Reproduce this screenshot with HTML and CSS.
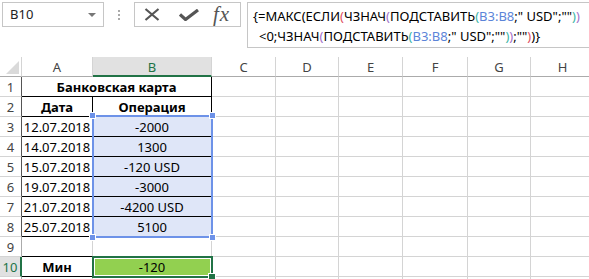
FILE: index.html
```html
<!DOCTYPE html>
<html lang="ru">
<head>
    <meta charset="UTF-8">
    <title>Банковская карта</title>
    <link rel="stylesheet" href="styles.css">
</head>
<body>
    <div class="toolbar">
        <div class="namebox">
            <span class="name">B10</span>
            <span class="caret"></span>
        </div>
        <div class="grip"><span></span></div>
        <div class="fbuttons">
            <svg class="ico-x" width="16" height="13" viewBox="0 0 16 13">
                <path d="M1.5 1 L14.5 12 M14.5 1 L1.5 12" stroke="#555" stroke-width="2.2" fill="none"/>
            </svg>
            <svg class="ico-ok" width="20" height="12" viewBox="0 0 20 12">
                <path d="M1 5.5 L6.5 10.5 L19 1" stroke="#555" stroke-width="3.2" fill="none"/>
            </svg>
            <span class="fx">fx</span>
        </div>
        <div class="formula">
            <div class="line1">{=МАКС<span class="p1">(</span>ЕСЛИ<span class="p2">(</span>ЧЗНАЧ<span class="p3">(</span>ПОДСТАВИТЬ<span class="p4">(</span><span class="ref">B3:B8</span>;" USD";""<span class="p4">)</span><span class="p3">)</span></div>
            <div class="line2">&lt;0;ЧЗНАЧ<span class="p3">(</span>ПОДСТАВИТЬ<span class="p4">(</span><span class="ref">B3:B8</span>;" USD";""<span class="p4">)</span><span class="p3">)</span>;""<span class="p2">)</span><span class="p1">)</span>}</div>
        </div>
    </div>

    <div class="sheet">
        <div class="row head">
            <div class="c corner"><span class="tri"></span></div>
            <div class="c">A</div>
            <div class="c hsel">B</div>
            <div class="c">C</div>
            <div class="c">D</div>
            <div class="c">E</div>
            <div class="c">F</div>
            <div class="c">G</div>
            <div class="c">H</div>
        </div>
        <div class="row">
            <div class="c rh k">1</div>
            <div class="c k bold wide">Банковская карта</div>
            <div class="c"></div><div class="c"></div><div class="c"></div><div class="c"></div><div class="c"></div><div class="c"></div>
        </div>
        <div class="row">
            <div class="c rh k">2</div>
            <div class="c k bold">Дата</div>
            <div class="c k bold">Операция</div>
            <div class="c"></div><div class="c"></div><div class="c"></div><div class="c"></div><div class="c"></div><div class="c"></div>
        </div>
        <div class="row">
            <div class="c rh k">3</div>
            <div class="c k">12.07.2018</div>
            <div class="c k sel">-2000</div>
            <div class="c"></div><div class="c"></div><div class="c"></div><div class="c"></div><div class="c"></div><div class="c"></div>
        </div>
        <div class="row">
            <div class="c rh k">4</div>
            <div class="c k">14.07.2018</div>
            <div class="c k sel">1300</div>
            <div class="c"></div><div class="c"></div><div class="c"></div><div class="c"></div><div class="c"></div><div class="c"></div>
        </div>
        <div class="row">
            <div class="c rh k">5</div>
            <div class="c k">15.07.2018</div>
            <div class="c k sel">-120 USD</div>
            <div class="c"></div><div class="c"></div><div class="c"></div><div class="c"></div><div class="c"></div><div class="c"></div>
        </div>
        <div class="row">
            <div class="c rh k">6</div>
            <div class="c k">19.07.2018</div>
            <div class="c k sel">-3000</div>
            <div class="c"></div><div class="c"></div><div class="c"></div><div class="c"></div><div class="c"></div><div class="c"></div>
        </div>
        <div class="row">
            <div class="c rh k">7</div>
            <div class="c k">21.07.2018</div>
            <div class="c k sel">-4200 USD</div>
            <div class="c"></div><div class="c"></div><div class="c"></div><div class="c"></div><div class="c"></div><div class="c"></div>
        </div>
        <div class="row">
            <div class="c rh k">8</div>
            <div class="c k">25.07.2018</div>
            <div class="c k sel">5100</div>
            <div class="c"></div><div class="c"></div><div class="c"></div><div class="c"></div><div class="c"></div><div class="c"></div>
        </div>
        <div class="row">
            <div class="c rh">9</div>
            <div class="c kb"></div>
            <div class="c kb"></div>
            <div class="c"></div><div class="c"></div><div class="c"></div><div class="c"></div><div class="c"></div><div class="c"></div>
        </div>
        <div class="row">
            <div class="c rh rsel">10</div>
            <div class="c k bold">Мин</div>
            <div class="c k green">-120</div>
            <div class="c"></div><div class="c"></div><div class="c"></div><div class="c"></div><div class="c"></div><div class="c"></div>
        </div>
        <div class="row">
            <div class="c rh"></div>
            <div class="c"></div><div class="c"></div><div class="c"></div><div class="c"></div><div class="c"></div><div class="c"></div><div class="c"></div><div class="c"></div>
        </div>

        <!-- selection frames over the grid -->
        <div class="range-sel">
            <span class="hd tl"></span><span class="hd tr"></span>
            <span class="hd bl"></span><span class="hd br"></span>
        </div>
        <div class="active-cell"><span class="fill-handle"></span></div>
    </div>
</body>
</html>
```

FILE: styles.css
```css
body { margin: 0; background: #fff; overflow: hidden; font-family: "Noto Sans", "Liberation Sans", sans-serif; }

/* formula bar */
.toolbar { display: flex; align-items: flex-start; height: 57px; padding: 2px 0 0 2px; box-sizing: border-box; }
.namebox { width: 102px; height: 25px; border: 1px solid #c6c6c6; box-sizing: border-box; display: flex; align-items: center; justify-content: space-between; padding: 0 7px 0 7px; }
.name { font-size: 13px; color: #222; line-height: 23px; }
.caret { width: 0; height: 0; border-left: 4px solid transparent; border-right: 4px solid transparent; border-top: 4px solid #777; }
.grip { width: 30px; height: 25px; display: flex; justify-content: center; align-items: center; }
.grip span { width: 2px; height: 10px; background: repeating-linear-gradient(#aaa 0 2px, transparent 2px 4px); }
.fbuttons { width: 107px; height: 25px; border: 1px solid #c6c6c6; box-sizing: border-box; display: flex; align-items: center; padding-left: 9px; }
.ico-x { margin-right: 19px; }
.ico-ok { margin-right: 14px; }
.fx { font-family: "Liberation Serif", serif; font-style: italic; font-size: 21px; color: #555; letter-spacing: 1px; line-height: 23px; }
.formula { flex: 1; height: 46px; margin-left: 6px; border: 1px solid #c6c6c6; border-right: none; box-sizing: border-box; padding: 3px 0 0 5px; font-size: 13px; line-height: 20px; color: #000; white-space: nowrap; overflow: hidden; }
.line2 { padding-left: 6px; }
.p2 { color: #e0505f; }
.p3 { color: #a271c9; }
.p4 { color: #3bb5a5; }
.ref { color: #5b84d8; }

/* grid */
.sheet { position: relative; width: 595px; }
.row { display: grid; grid-template-columns: 22px 71px 119px 64px 63px 64px 65px 63px 64px; height: 20px; }
.c { border-right: 1px solid #d4d4d4; border-bottom: 1px solid #d4d4d4; box-sizing: border-box; text-align: center; font-size: 13px; line-height: 19px; padding-top: 1px; color: #000; white-space: nowrap; overflow: hidden; }
.head .c { color: #444; border-bottom-color: #ababab; }
.head .hsel { background: #e1e1e1; color: #217346; border-bottom: 2px solid #217346; }
.corner { display: flex; justify-content: flex-end; align-items: flex-end; padding: 0 2px 2px 0; }
.tri { width: 13px; height: 13px; background: #dadada; clip-path: polygon(100% 0, 100% 100%, 0 100%); }
.rh { color: #444; border-right-color: #ababab; }
.rh.k { border-right-color: #555; border-bottom-color: #d4d4d4; }
.rsel { background: #e1e1e1; color: #217346; border-right: 2px solid #217346; }
.k { border-right-color: #000; border-bottom-color: #000; }
.kb { border-bottom-color: #000; }
.bold { font-weight: bold; }
.wide { grid-column: span 2; }
.sel { background: #dfe6f8; }
.green { background: #92d050; }

/* selection overlays */
.range-sel { position: absolute; left: 92px; top: 58px; width: 121px; height: 123px; border: 2px solid #6d92e8; box-sizing: border-box; }
.hd { position: absolute; width: 5px; height: 5px; background: #6d92e8; border: 1px solid #fff; }
.tl { left: -5px; top: -5px; }
.tr { right: -5px; top: -5px; }
.bl { left: -5px; bottom: -5px; }
.br { right: -5px; bottom: -5px; }
.active-cell { position: absolute; left: 92px; top: 199px; width: 121px; height: 22px; border: 2px solid #217346; box-sizing: border-box; box-shadow: inset 0 0 0 1px #fff; }
.fill-handle { position: absolute; right: -5px; bottom: -5px; width: 6px; height: 6px; background: #217346; border: 1px solid #fff; }
```
